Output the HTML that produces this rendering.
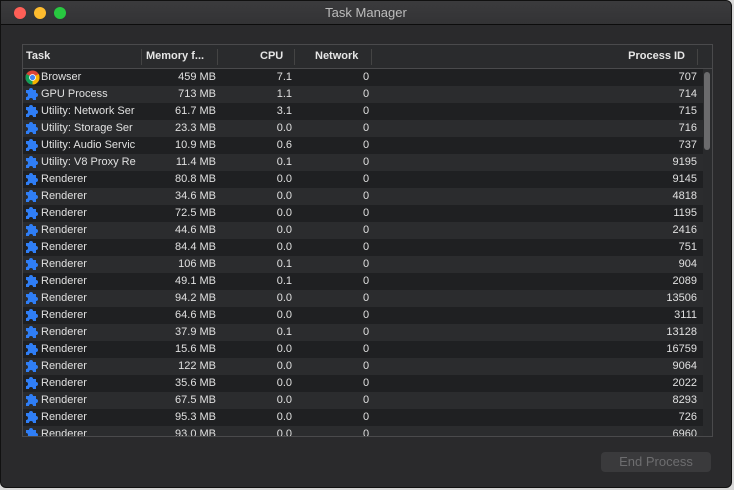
<!DOCTYPE html>
<html><head><meta charset="utf-8"><style>
*{margin:0;padding:0;box-sizing:border-box}
html,body{width:734px;height:490px;overflow:hidden;background:#d8d8d8;font-family:"Liberation Sans",sans-serif}
#win{position:absolute;left:0;top:0;width:732px;height:488px;background:#2a2a2c;border-radius:0 6px 6px 6px;border:1px solid #111;overflow:hidden}
#title{position:absolute;left:0;top:0;right:0;height:24px;background:linear-gradient(#3b3b3d,#333335);border-bottom:1px solid #0c0c0c;color:#bdbdbd;font-size:13px;text-align:center;line-height:24px}
.tl{position:absolute;top:6px;width:12px;height:12px;border-radius:50%}
#tbl{position:absolute;left:21px;top:43px;width:691px;height:393px;border:1px solid #4a4a4c;background:#2a2b2d;overflow:hidden}
#hdr{position:absolute;left:0;top:0;width:689px;height:24px;border-bottom:1px solid #4a4a4c;background:#2a2b2d;color:#e6e6e6;font-size:11px;font-weight:bold}
#hdr span{position:absolute;top:5px}
.dv{position:absolute;top:4px;width:1px;height:16px;background:#444}
.row{position:absolute;left:0;width:680px;height:17px;color:#e0e0e0;font-size:11px}
.row span{position:absolute;top:2px}
.row .n{left:18px}
.row .m{right:487px}
.row .c{right:411px}
.row .w{left:340px}
.row .p{right:6px}
.row svg{position:absolute;left:2px;top:1px}
#sb{position:absolute;left:681px;top:27px;width:6px;height:78px;border-radius:3px;background:#6b6b6d}
#btn{position:absolute;left:600px;top:451px;width:110px;height:20px;border-radius:4px;background:#3a3a3c;color:#6d6d6f;font-size:13px;text-align:center;line-height:20px}
</style></head><body>
<div id="win">
<div id="title">Task Manager
<div class="tl" style="left:13px;background:#fe5f57"></div>
<div class="tl" style="left:33px;background:#febc2e"></div>
<div class="tl" style="left:53px;background:#28c840"></div>
</div>
<div id="tbl">
<div id="hdr">
<span style="left:3px">Task</span>
<span style="left:123px">Memory f...</span>
<span style="left:237px">CPU</span>
<span style="left:292px">Network</span>
<span style="right:27px">Process ID</span>
<div class="dv" style="left:118px"></div><div class="dv" style="left:194px"></div><div class="dv" style="left:271px"></div><div class="dv" style="left:348px"></div><div class="dv" style="left:674px"></div>
</div>
<div id="rows"></div>
<div id="sb"></div>
</div>
<div id="btn">End Process</div>
</div>
<script>
var d=[["Browser","459 MB","7.1","707"],["GPU Process","713 MB","1.1","714"],["Utility: Network Ser","61.7 MB","3.1","715"],["Utility: Storage Ser","23.3 MB","0.0","716"],["Utility: Audio Servic","10.9 MB","0.6","737"],["Utility: V8 Proxy Re","11.4 MB","0.1","9195"],["Renderer","80.8 MB","0.0","9145"],["Renderer","34.6 MB","0.0","4818"],["Renderer","72.5 MB","0.0","1195"],["Renderer","44.6 MB","0.0","2416"],["Renderer","84.4 MB","0.0","751"],["Renderer","106 MB","0.1","904"],["Renderer","49.1 MB","0.1","2089"],["Renderer","94.2 MB","0.0","13506"],["Renderer","64.6 MB","0.0","3111"],["Renderer","37.9 MB","0.1","13128"],["Renderer","15.6 MB","0.0","16759"],["Renderer","122 MB","0.0","9064"],["Renderer","35.6 MB","0.0","2022"],["Renderer","67.5 MB","0.0","8293"],["Renderer","95.3 MB","0.0","726"],["Renderer","93.0 MB","0.0","6960"]];
var chrome='<svg width="15" height="15" viewBox="0 0 16 16"><circle cx="8" cy="8" r="7.5" fill="#db4437"/><path d="M8 8 L1.5 4.3 A7.5 7.5 0 0 0 8 15.5 Z" fill="#0f9d58"/><path d="M8 8 L8 15.5 A7.5 7.5 0 0 0 14.5 4.3 Z" fill="#f4b400"/><circle cx="8" cy="8" r="3.6" fill="#fff"/><circle cx="8" cy="8" r="2.8" fill="#4285f4"/></svg>';
var puz='<svg width="14" height="14" viewBox="0 0 14 14"><path d="M1 4h3a2 2 0 1 1 4 0h3v3a2 2 0 1 1 0 4v3H8a2 2 0 1 0-4 0H1v-3a2 2 0 1 0 0-4z" fill="#2f7ef6" transform="translate(0,-1)"/></svg>';
var h='';
for(var i=0;i<d.length;i++){var r=d[i];h+='<div class="row" style="top:'+(24+17*i)+'px;background:'+(i%2?'#2b2c2e':'#1f2022')+'">'+(i==0?chrome:puz)+'<span class="n">'+r[0]+'</span><span class="m">'+r[1]+'</span><span class="c">'+r[2]+'</span><span class="w">0</span><span class="p">'+r[3]+'</span></div>';}
document.getElementById('rows').innerHTML=h;
</script>
</body></html>
